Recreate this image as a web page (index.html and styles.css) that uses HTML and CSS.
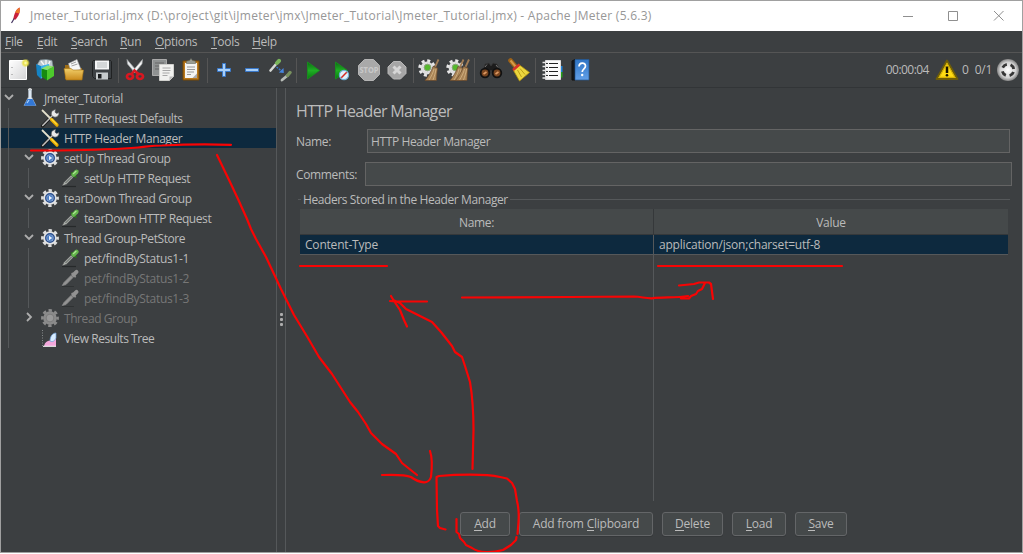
FILE: index.html
```html
<!DOCTYPE html>
<html lang="en">
<head>
<meta charset="utf-8">
<title>Apache JMeter</title>
<link rel="stylesheet" href="styles.css">
</head>
<body>
<svg class="defs" width="0" height="0" aria-hidden="true">
  <defs>
    <linearGradient id="gGreen" x1="0" y1="0" x2="0" y2="1"><stop offset="0" stop-color="#0a6b12"/><stop offset=".5" stop-color="#1fae24"/><stop offset="1" stop-color="#087a10"/></linearGradient>
    <linearGradient id="gGold" x1="0" y1="0" x2="0" y2="1"><stop offset="0" stop-color="#f2cf6a"/><stop offset="1" stop-color="#c98a1c"/></linearGradient>
    <linearGradient id="gPaper" x1="0" y1="0" x2="1" y2="1"><stop offset="0" stop-color="#fff"/><stop offset="1" stop-color="#d4d4d6"/></linearGradient>
    <linearGradient id="gBook" x1="0" y1="0" x2="0" y2="1"><stop offset="0" stop-color="#2f74c4"/><stop offset="1" stop-color="#62a0e8"/></linearGradient>
    <radialGradient id="gBall"><stop offset="0" stop-color="#fff"/><stop offset=".7" stop-color="#d2d2d2"/><stop offset="1" stop-color="#858585"/></radialGradient>
    <radialGradient id="gSun"><stop offset="0" stop-color="#ffffc0"/><stop offset=".5" stop-color="#e8e04a"/><stop offset="1" stop-color="#e8e04a" stop-opacity="0"/></radialGradient>
    <symbol id="tools" viewBox="0 0 20 20">
      <path d="M2.500 17.800L12 8" stroke="#1a1a1a" stroke-width="3.200" stroke-linecap="round"/>
      <path d="M2.700 17.500L13 7" stroke="#bdbdbd" stroke-width="1.600" stroke-linecap="round"/>
      <path d="M12 8a4 4 0 0 1 1-5.600l2.600-1.200-.6 3 1.600 1.200 2.400-.8a4 4 0 0 1-5 4.400z" fill="#e9e9e9" stroke="#555" stroke-width=".6"/>
      <path d="M2 2l8.500 8.500" stroke="#e3e0cd" stroke-width="1.800"/>
      <path d="M11.500 11.500l5.500 5.500" stroke="#e8ac00" stroke-width="3.200" stroke-linecap="round"/>
      <path d="M11.500 11l5.300 5.300" stroke="#ffdb3d" stroke-width="1.200"/>
    </symbol>
    <symbol id="gear" viewBox="0 0 20 20">
      <circle cx="10" cy="10" r="7.600" fill="none" stroke="#dedede" stroke-width="2.600" stroke-dasharray="3.400 2.569" stroke-dashoffset="1.700"/>
      <circle cx="10" cy="10" r="6.800" fill="#e4e4e4"/>
      <circle cx="10" cy="10" r="4.300" fill="#9fb6d8" stroke="#294f90" stroke-width="1.400"/>
      <circle cx="10" cy="10" r="2.900" fill="#4c7fc6"/>
      <path d="M9 7.800l3.300 2.200L9 12.200z" fill="#e9f2ff"/>
    </symbol>
    <symbol id="gearOff" viewBox="0 0 20 20">
      <circle cx="10" cy="10" r="7.600" fill="none" stroke="#8b8b8b" stroke-width="2.600" stroke-dasharray="3.400 2.569" stroke-dashoffset="1.700"/>
      <circle cx="10" cy="10" r="6.800" fill="#8b8b8b"/>
      <circle cx="10" cy="10" r="3.900" fill="#999" stroke="#7c7c7c"/>
    </symbol>
    <symbol id="pip" viewBox="0 0 20 20">
      <path d="M2 18.500h14" stroke="#26292a" stroke-width="1.200"/>
      <path d="M2.300 17.500L4 14.500l7-7 2 2-7 7z" fill="#d5d9d5" stroke="#555" stroke-width=".7"/>
      <path d="M5 15.500l6.500-6.500" stroke="#2c332c" stroke-width="1"/>
      <path d="M11.800 5l4 4" stroke="#2e6c20" stroke-width="2" stroke-linecap="round"/>
      <path d="M13.500 6.800l3-3" stroke="#63b54c" stroke-width="4.200" stroke-linecap="round"/>
      <path d="M13.500 5.600l2.500-2.300" stroke="#b4e59a" stroke-width="1.200" stroke-linecap="round"/>
    </symbol>
    <symbol id="pipOff" viewBox="0 0 20 20">
      <path d="M2 18.500h12" stroke="#2c2f30" stroke-width=".8"/>
      <path d="M2.300 17.500L4 14.500l7-7 2 2-7 7z" fill="#939393" stroke="#8a8a8a" stroke-width=".8"/>
      <path d="M12.300 5.700l2.800 2.800" stroke="#8a8a8a" stroke-width="2.200" stroke-linecap="round"/>
      <path d="M13.500 6.800l3-3" stroke="#929292" stroke-width="4" stroke-linecap="round"/>
    </symbol>
    <symbol id="cog" viewBox="0 0 24 24">
      <circle cx="9" cy="10" r="7.200" fill="none" stroke="#e8e8e8" stroke-width="3" stroke-dasharray="3 2.655"/>
      <circle cx="9" cy="10" r="6.400" fill="#dedede"/>
      <circle cx="9.500" cy="9.500" r="3.300" fill="#55b82d" stroke="#8ba37c"/>
    </symbol>
    <symbol id="besom" viewBox="0 0 24 24">
      <path d="M20.500 1.500L17 9" stroke="#a07c55" stroke-width="1.800"/>
      <path d="M15 8.500l4.500 1.500c-.6 4-.8 8-1 12.500H7c3-4 6-8 8-14z" fill="#a98456" stroke="#69492b" stroke-width=".7"/>
      <path d="M16 11c-1 4-3 8-5 11M18 11c-.5 4-2 8-3 11" stroke="#d5b689" stroke-width=".8" fill="none"/>
    </symbol>
  </defs>
</svg>

<div class="window">
  <header class="titlebar">
    <svg class="feather" viewBox="0 0 12 18"><path d="M9.500 .5C6 2 4 7.500 3.300 12l2 .8C8.500 9.500 10.500 5 9.500 .5z" fill="#c8203c"/><path d="M9.500 .5C7 2 5.800 4 5.200 5.500l4 1C9.900 4.500 9.900 3 9.500 .5z" fill="#ee7a2a"/><path d="M4.200 11.500L1.500 16" stroke="#41305d" stroke-width="1.200"/></svg>
    <span class="title">Jmeter_Tutorial.jmx (D:\project\git\iJmeter\jmx\Jmeter_Tutorial\Jmeter_Tutorial.jmx) - Apache JMeter (5.6.3)</span>
    <svg class="winctl" viewBox="0 0 110 12"><path d="M0 6.500h10M45.500 1.500h9v9h-9zM91 1l9.500 9.500M100.500 1L91 10.500" fill="none" stroke="#8f8f8f"/></svg>
  </header>

  <nav class="menubar">
    <span class="m1"><u>F</u>ile</span><span class="m2"><u>E</u>dit</span><span class="m3"><u>S</u>earch</span><span class="m4"><u>R</u>un</span><span class="m5"><u>O</u>ptions</span><span class="m6"><u>T</u>ools</span><span><u>H</u>elp</span>
  </nav>

  <div class="toolbar">
    <svg viewBox="0 0 24 24"><path d="M3.500 2.500h17v19h-17z" fill="url(#gPaper)" stroke="#fff"/><path d="M6 9v1M6 16v1" stroke="#888"/><circle cx="19.500" cy="5" r="4.500" fill="url(#gSun)"/></svg>
    <svg viewBox="0 0 24 24"><path d="M3 7l3-5 6-.5 6 1 1 6-9 3z" fill="#bcc6cb" stroke="#7a8b92" stroke-width=".7"/><path d="M7 3l3 4M12 2v5M16 3l-2 5" stroke="#f7f7f7" stroke-width="1.300"/><path d="M2 6l5 2v13l-4-4z" fill="#1583c4"/><path d="M7 8l8-2v5l-8 10z" fill="#39b1ed"/><path d="M7.500 10.500L13 12v10.500l-5.500-4z" fill="#178b10"/><path d="M13 12l7-3.500V18l-7 4.500z" fill="#4dca2c"/><path d="M7.500 10.500l6-3 6.500 1L13 12z" fill="#8be366"/></svg>
    <svg viewBox="0 0 24 24"><path d="M3 7h5l2 3h10v11H3z" fill="#9d6d17"/><path d="M6.500 5.500L15 1.500l4 10-10 2z" fill="#f8f8f8" stroke="#aaa" stroke-width=".6"/><path d="M9 6l5-2M9.500 8l6-2" stroke="#888" stroke-width=".8"/><path d="M2 10.500h7l2 1.500h10.500L20 22H4z" fill="url(#gGold)" stroke="#a87313" stroke-width=".6"/></svg>
    <svg viewBox="0 0 24 24"><path d="M2.500 3.500l1-1h17l1 1v17h-17l-2-2z" fill="#3d4144" stroke="#202223" /><path d="M5 2.500h14v9H5z" fill="#f4f5f6"/><path d="M7 5h10M7 7h10M7 9h10" stroke="#a4a9ad" stroke-width=".8"/><path d="M6 14.500h12v7H6z" fill="#c5cacc"/><path d="M8 16h3.500v4.500H8z" fill="#17191b"/></svg>
    <i class="sep"></i>
    <svg viewBox="0 0 24 24"><path d="M4 1.500l.5 4.500 7.500 9 1.800-2z" fill="#e9ecee" stroke="#9da2a4" stroke-width=".7"/><path d="M19.500 1.500l-.5 4.500-7.500 9-1.800-2z" fill="#f6f6f6" stroke="#9da2a4" stroke-width=".7"/><path d="M8.500 16l3-3.500 4 3.500" fill="none" stroke="#d91922" stroke-width="2.600"/><ellipse cx="7" cy="18.500" rx="3" ry="2.500" fill="none" stroke="#d81720" stroke-width="2.700"/><ellipse cx="17" cy="18.500" rx="3" ry="2.500" fill="none" stroke="#d81720" stroke-width="2.700"/></svg>
    <svg viewBox="0 0 24 24"><path d="M1.500 1.500h14v16h-14z" fill="#8f9292" stroke="#aaa"/><path d="M4 5h9M4 8h5M4 11h5" stroke="#666"/><path d="M8.500 6.500h14v12l-4 4h-10z" fill="#f1f1ef" stroke="#d0d0cd"/><path d="M11.500 10h8M11.500 12.500h8M11.500 15h7M11.500 17.500h5" stroke="#a8a8a8"/><path d="M18.500 22.500v-4h4z" fill="#bbb"/></svg>
    <svg viewBox="0 0 24 24"><path d="M4 3h16v19H4z" fill="#ba791c" stroke="#754807"/><path d="M6 5h12v15H6z" fill="#f4f4f2"/><path d="M8 9h8M8 11.500h8M8 14h7M8 16.500h4" stroke="#999"/><path d="M7.500 5.500V3.200l3-.7 1.500-2 1.500 2 3 .7v2.300z" fill="#9a9c91" stroke="#66695f" stroke-width=".6"/><path d="M13.500 20l4.500-4.500V20z" fill="#aaa"/></svg>
    <i class="sep"></i>
    <svg viewBox="0 0 24 24"><path d="M10.500 5.500h3v5h5v3h-5v5h-3v-5h-5v-3h5z" fill="#a8cff8" stroke="#3978c9"/></svg>
    <svg viewBox="0 0 24 24"><path d="M5.500 10.500h13v3h-13z" fill="#a8cff8" stroke="#3978c9"/></svg>
    <svg viewBox="0 0 24 24"><path d="M2.500 12.500l6.500-7.500" stroke="#d5d8d5" stroke-width="2.600" stroke-linecap="round"/><path d="M9 5l2-2.200" stroke="#79b45b" stroke-width="4" stroke-linecap="round"/><path d="M14 22l5.500-4.500" stroke="#b8bdb8" stroke-width="2.800" stroke-linecap="round"/><path d="M19.500 17.500l2.500-3" stroke="#79925f" stroke-width="3.400" stroke-linecap="round"/><path d="M8.500 9l5 4" stroke="#3a78d0" stroke-width="1.300" stroke-dasharray="2 1"/><path d="M15.500 10l.3 5-5-.5z" fill="#4686df"/></svg>
    <i class="sep"></i>
    <svg viewBox="0 0 24 24"><path d="M6.500 4v17L18.500 12.500z" fill="url(#gGreen)" stroke="#17941c" stroke-width=".8"/></svg>
    <svg viewBox="0 0 24 24"><path d="M6.500 4v17L18.500 12.500z" fill="url(#gGreen)" stroke="#17941c" stroke-width=".8"/><circle cx="15" cy="17" r="4.600" fill="#dff0fa" stroke="#6fb0d8" stroke-width="1.200"/><path d="M12.300 19.700l5.400-5.400" stroke="#d22a22" stroke-width="1.500"/></svg>
    <svg viewBox="0 0 24 24"><path d="M7.500 1.500h9l6 6v9l-6 6h-9l-6-6v-9z" fill="#a9a9a9" stroke="#b4b4b4"/><text x="12" y="15.300" text-anchor="middle" class="stop" textLength="19" lengthAdjust="spacingAndGlyphs">STOP</text></svg>
    <svg viewBox="0 0 24 24"><path d="M8.500 3.500h7l5.500 5.500v6.500L15.500 21h-7L3 15.500V9z" fill="#a6a6a6" stroke="#b8b8b8"/><path d="M8.500 8.500l7 7m0-7l-7 7" stroke="#d6d6d6" stroke-width="3"/></svg>
    <i class="sep"></i>
    <svg viewBox="0 0 24 24"><use href="#cog"/><use href="#besom"/></svg>
    <svg viewBox="0 0 24 24"><use href="#cog"/><use href="#besom" x="-3"/><use href="#besom" x="2.500"/></svg>
    <i class="sep"></i>
    <svg viewBox="0 0 24 24"><path d="M4 12l2-6 4-1 2 3 2-3 4 1 3 6-3 3h-5l-1-3-1 3H5z" fill="#1c1c1c" stroke="#3a3a3a" stroke-width=".7"/><path d="M6 9l2-2.500M17 7l2 2.500" stroke="#777"/><circle cx="6" cy="15" r="4.300" fill="#79451f" stroke="#111" stroke-width="1.800"/><circle cx="18" cy="15" r="4.300" fill="#79451f" stroke="#111" stroke-width="1.800"/><path d="M4.500 16l3-2M16.500 16l3-2" stroke="#dd9963" stroke-width="1.600"/></svg>
    <svg viewBox="0 0 24 24"><path d="M3.500 2.500l5 6" stroke="#9d6217" stroke-width="4.600" stroke-linecap="round"/><path d="M3.500 2.500l5 6" stroke="#d69b48" stroke-width="2"/><path d="M12.500 7l10 7.500L12.500 23 6.500 12.500z" fill="#ecd63e" stroke="#af920d" stroke-width=".8"/><path d="M10.500 12l4 7M13 10.500l5 6" stroke="#ae930c" stroke-width=".8"/><path d="M6 12l6.500-5.500" stroke="#d6322a" stroke-width="2.600"/></svg>
    <i class="sep"></i>
    <svg viewBox="0 0 24 24"><path d="M19 8h3.500v6H19z" fill="#1c83dd"/><path d="M19 14h3.500v5.500H19z" fill="#22a11a"/><path d="M5.500 2.500h15v19h-15z" fill="#fafafa" stroke="#ddd"/><path d="M9 5.500h9M9 9.500h9M9 13.500h9M9 17.500h9" stroke="#222" stroke-width="1.200"/><path d="M2.500 4.500h5M2.500 8.500h5M2.500 12.500h5M2.500 16.500h5M2.500 20h5" stroke="#e6e6e6" stroke-width="1.600"/><path d="M6 5.500h2M6 9.500h2M6 13.500h2M6 17.500h2" stroke="#333"/></svg>
    <svg viewBox="0 0 24 24"><path d="M4 3l3-1.500V22H4z" fill="#15191e" stroke="#111"/><path d="M7 1.500h14V22H7z" fill="url(#gBook)" stroke="#225793" stroke-width=".7"/><path d="M11 8.500c0-4.500 6.500-4.500 6.500-.5 0 2.800-3.300 2.800-3.300 6" fill="none" stroke="#fff" stroke-width="1.700"/><circle cx="14.200" cy="17" r="1.200" fill="#fff"/></svg>
    <div class="status">
      <span class="clock">00:00:04</span>
      <svg class="warn" viewBox="0 0 24 24"><path d="M12 2.500L22.500 21h-21z" fill="#f7cf0c" stroke="#6e5d08" stroke-width="1.800" stroke-linejoin="round"/><path d="M12 5.500L19.800 19.300H4.200z" fill="#ffdc13" stroke="#c9a400" stroke-width=".8"/><path d="M12 8.500v6.500" stroke="#171300" stroke-width="2.500"/><circle cx="12" cy="17.300" r="1.300" fill="#171300"/></svg>
      <span class="errs">0</span><span class="threads">0/1</span>
      <svg class="ball" viewBox="0 0 24 24"><circle cx="12" cy="12" r="11" fill="url(#gBall)"/><circle cx="12" cy="12" r="5.800" fill="none" stroke="#353535" stroke-width="2.800" stroke-dasharray="5.200 3.911" stroke-dashoffset="-2" /></svg>
    </div>
  </div>

  <main class="body">
    <aside class="tree">
      <div class="row d0"><svg class="chev" viewBox="0 0 10 10"><path d="M1 3l4 4 4-4"/></svg><svg class="ico" viewBox="0 0 20 20"><path d="M8 1.500h4M10 0v2" stroke="#ddd" stroke-width="1.500"/><path d="M8.500 2h3v7l4.500 8.500H4L8.500 9z" fill="#dde7f1" stroke="#aab5bf" stroke-width=".6"/><path d="M7.500 11h5l3.500 6.800H4z" fill="#3277d5"/><path d="M7 15l2-3" stroke="#a8cffa" stroke-width="1.300"/></svg><span>Jmeter_Tutorial</span></div>
      <div class="row d1"><svg class="ico"><use href="#tools"/></svg><span>HTTP Request Defaults</span></div>
      <div class="row d1 selected"><svg class="ico"><use href="#tools"/></svg><span>HTTP Header Manager</span></div>
      <div class="row d1"><svg class="chev" viewBox="0 0 10 10"><path d="M1 3l4 4 4-4"/></svg><svg class="ico"><use href="#gear"/></svg><span>setUp Thread Group</span></div>
      <div class="row d2"><svg class="ico"><use href="#pip"/></svg><span>setUp HTTP Request</span></div>
      <div class="row d1"><svg class="chev" viewBox="0 0 10 10"><path d="M1 3l4 4 4-4"/></svg><svg class="ico"><use href="#gear"/></svg><span>tearDown Thread Group</span></div>
      <div class="row d2"><svg class="ico"><use href="#pip"/></svg><span>tearDown HTTP Request</span></div>
      <div class="row d1"><svg class="chev" viewBox="0 0 10 10"><path d="M1 3l4 4 4-4"/></svg><svg class="ico"><use href="#gear"/></svg><span>Thread Group-PetStore</span></div>
      <div class="row d2 wide"><svg class="ico"><use href="#pip"/></svg><span>pet/findByStatus1-1</span></div>
      <div class="row d2 off wide"><svg class="ico"><use href="#pipOff"/></svg><span>pet/findByStatus1-2</span></div>
      <div class="row d2 off wide"><svg class="ico"><use href="#pipOff"/></svg><span>pet/findByStatus1-3</span></div>
      <div class="row d1 off"><svg class="chev" viewBox="0 0 10 10"><path d="M3 1l4 4-4 4"/></svg><svg class="ico"><use href="#gearOff"/></svg><span>Thread Group</span></div>
      <div class="row d1"><svg class="ico" viewBox="0 0 20 20"><path d="M2.500 2v16" stroke="#85898a" stroke-dasharray="1 1.500"/><path d="M4 18c1-4 3-5 6-5.500l6-4.500v10z" fill="#f3a8dc"/><path d="M10 13c0-4 2-8 6-8v5c-1.500 3-3 4.500-6 3z" fill="#d8ecff" stroke="#6d9fd8" stroke-width=".7"/><path d="M3 18.300h13" stroke="#fff"/></svg><span>View Results Tree</span></div>
    </aside>
    <div class="divider"><i></i><i></i><i></i></div>
    <section class="panel">
      <h1>HTTP Header Manager</h1>
      <div class="field name"><label>Name:</label><div class="input">HTTP Header Manager</div></div>
      <div class="field comments"><label>Comments:</label><div class="input"></div></div>
      <div class="legend"><span>Headers Stored in the Header Manager</span></div>
      <div class="table">
        <div class="cell th">Name:</div><div class="cell th">Value</div>
        <div class="cell td">Content-Type</div><div class="cell td json">application/json;charset=utf-8</div>
        <div class="cell blank"></div><div class="cell blank"></div>
      </div>
      <div class="buttons">
        <button class="b-add"><span><u>A</u>dd</span></button><button class="b-clip"><span>Add from <u>C</u>lipboard</span></button><button class="b-del"><span><u>D</u>elete</span></button><button class="b-load"><span><u>L</u>oad</span></button><button class="b-save"><span><u>S</u>ave</span></button>
      </div>
    </section>
  </main>

  <svg class="ink" viewBox="0 0 1023 554">
    <path d="M31 150.500L60 150.500C90 150 120 149 138 147.500C148 146.500 152 145.500 162 145.500C185 144.300 205 144 231 144.800"/>
    <path d="M217 155L230 182L238 199L247 219L251 229L256 239L266 257L281 289L294 315L308 338L319 357L332 374L350 402L358 412L366 424L371 433L382 444L396 454L402 463L417 475"/>
    <path d="M382 475C395 474.500 405 474.500 411 477C415 480 420 482 424 482.300C427 482.500 430 480 431 477C432 468 432.500 458 430 451"/>
    <path d="M300 266H387M658 266H842"/>
    <path d="M462 297.500L570 297L634 296.500C642 297 646 298.500 652 298.300C664 297 676 298 688 296M681 298.500H689L691 296L696 294L698 291L702 289L705 283M679 285.500L694 284L699 282.500L709 282.500L711 284L713 299"/>
    <path d="M391 296L394 301L400 310L404 320L407 326.500M390 301L395 301.500H427M393 300L400 303L406 309L419 315.500L432 322L441 332L452 346L455 352L462 357L465 366L470 382C473 400 473.500 410 473.500 430L472.500 469"/>
    <path d="M445.500 529.500L440 528L438 526L437 510L436.500 477L439 476C455 474.500 485 473.500 500 477L507 478.500L512 483L515 489L517 501C519 509 519 515 518.500 522L517.500 534M456.500 519V532L459 534L460 538L464 542L466 545L472 548C479 553.500 493 552.500 503 550L511 545L516 540L516.500 537"/>
  </svg>
</div>
</body>
</html>
```

FILE: styles.css
```css
* { box-sizing: border-box; }
body { margin: 0; background: #fff; font: 12px/16px "Open Sans", "Noto Sans", sans-serif; color: #bbb; }
.defs { display: block; position: absolute; }
u { text-decoration: none; border-bottom: 1px solid #bbb; display: inline-block; line-height: 12px; }

.window { position: relative; width: 1023px; height: 553px; border: 1px solid #a0a0a0; background: #3c3f41; display: flex; flex-direction: column; overflow: hidden; }

.titlebar { height: 30px; flex: none; background: #fff; display: flex; align-items: center; padding-left: 9px; color: #979797; }
.feather { width: 12px; height: 18px; margin-right: 8px; }
.title { flex: 1; letter-spacing: 0.26px; white-space: nowrap; }
.winctl { width: 110px; height: 12px; margin-right: 9px; }

.menubar { height: 22px; flex: none; border-bottom: 1px solid #555; display: flex; align-items: center; padding-left: 4px; letter-spacing: -0.3px; }
.m1 { width: 32px; }
.m2 { width: 34px; }
.m3 { width: 49px; }
.m4 { width: 35px; }
.m5 { width: 56px; }
.m6 { width: 41px; }

.toolbar { height: 35px; flex: none; border-bottom: 1px solid #323537; display: flex; align-items: center; padding-left: 3px; }
.toolbar > svg { width: 24px; height: 24px; margin: 0 2px; flex: none; }
.sep { width: 1px; height: 25px; margin: 0 2px; background: #555; flex: none; }
.stop { font: bold 8px "Open Sans", sans-serif; fill: #c9c9c9; }
.status { margin-left: auto; display: flex; align-items: center; padding-right: 2px; }
.clock { letter-spacing: -0.55px; margin-right: 6px; }
.warn, .ball { width: 24px; height: 24px; }
.errs { margin: 0 6px 0 3px; }
.threads { margin-right: 4px; letter-spacing: -0.3px; }

.body { flex: 1; display: flex; min-height: 0; }
.tree { width: 276px; border-right: 1px solid #55585a; }
.row { height: 20px; display: flex; align-items: center; white-space: nowrap; position: relative; }
.row span { letter-spacing: -0.43px; padding-top: 1px; }
.wide span { letter-spacing: -0.3px; }
.ico { width: 20px; height: 20px; margin-right: 4px; flex: none; }
.chev { position: absolute; width: 10px; height: 10px; top: 4px; }
.chev path { fill: none; stroke: #adadad; stroke-width: 1.8; }
.d0 { padding-left: 19px; }
.d0 .chev { left: 3px; }
.d1 { padding-left: 39px; background: linear-gradient(#55585a, #55585a) 7px 0 / 1px 100% no-repeat; }
.d1 .chev { left: 23px; }
.d2 { padding-left: 59px; background: linear-gradient(#55585a, #55585a) 7px 0 / 1px 100% no-repeat, linear-gradient(#55585a, #55585a) 27px 0 / 1px 100% no-repeat; }
.selected { background-color: #0d293e; }
.off { color: #777; }

.divider { width: 9px; border-right: 1px solid #55585a; display: flex; flex-direction: column; align-items: center; justify-content: center; gap: 2px; padding-bottom: 2px; }
.divider i { width: 3px; height: 3px; border-radius: 1px; background: #adadad; }

.panel { flex: 1; min-width: 0; display: flex; flex-direction: column; padding: 10px 0 0 10px; }
h1 { margin: 0; font-size: 16px; font-weight: 400; line-height: 26px; height: 31px; letter-spacing: -0.67px; }
.field { display: flex; align-items: center; height: 24px; }
.field label { flex: none; padding-top: 2px; letter-spacing: -0.35px; }
.input { flex: 1; height: 24px; border: 1px solid #646464; background: #45494a; line-height: 24px; padding-left: 3px; letter-spacing: -0.38px; }
.name label { width: 71px; }
.name { padding-right: 12px; margin-bottom: 9px; }
.comments label { width: 69px; }
.comments { padding-right: 10px; }
.legend { display: flex; align-items: center; height: 20px; margin: 3px 12px 0 2px; gap: 2px; letter-spacing: -0.4px; }
.legend::before { content: ""; width: 3px; height: 1px; background: #55585a; }
.legend::after { content: ""; flex: 1; height: 1px; background: #55585a; }
.legend span { padding-top: 1px; }
.table { display: grid; grid-template-columns: 354px 354px; grid-template-rows: 26px 20px 246px; margin-left: 4px; }
.cell { border-right: 1px solid #55585a; }
.cell:nth-child(even) { border-right: 0; }
.th { background: #45494a; border-bottom: 1px solid #35383a; border-right-color: #35383a; text-align: center; line-height: 28px; letter-spacing: -0.3px; }
.td { background: #0d293e; border-bottom: 1px solid #55585a; padding-left: 5px; line-height: 20px; letter-spacing: -0.2px; }
.buttons { display: flex; margin: 11px 0 0 164px; }
button { height: 24px; padding: 0; border: 1px solid #646668; border-radius: 3px; background: #45494a; color: #bbb; font: 12px/20px "Open Sans", sans-serif; letter-spacing: -0.22px; box-shadow: 0 1px 0 #35383a; flex: none; }
.b-add { width: 50px; margin-right: 9px; }
.b-clip { width: 134px; margin-right: 9px; }
.b-del { width: 61px; margin-right: 9px; }
.b-load { width: 54px; margin-right: 9px; }
.b-save { width: 52px; }

.ink { position: absolute; left: -1px; top: -1px; width: 1023px; height: 554px; pointer-events: none; }
.ink path { fill: none; stroke: #f80404; stroke-width: 2.2; stroke-linecap: round; stroke-linejoin: round; }
```
